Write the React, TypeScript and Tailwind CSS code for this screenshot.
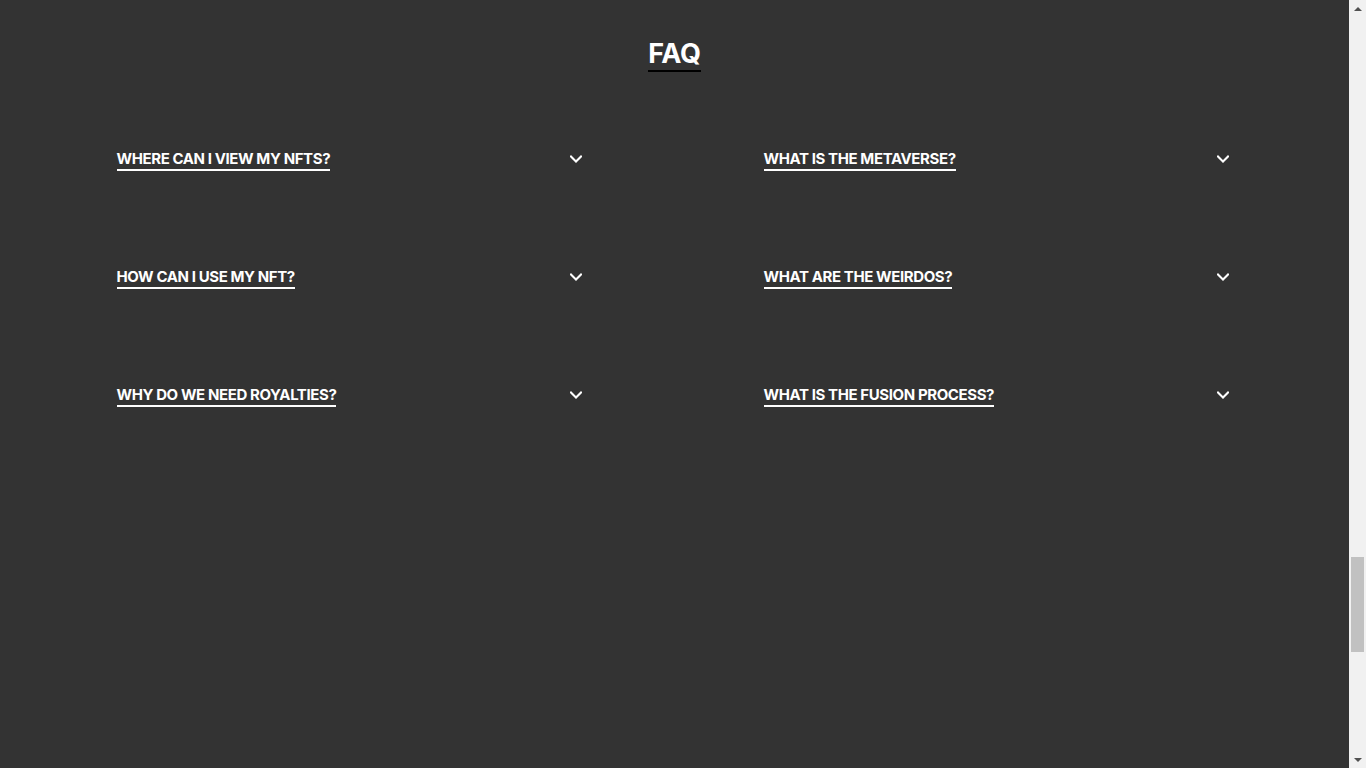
import React from "react";

const left = ["WHERE CAN I VIEW MY NFTS?", "HOW CAN I USE MY NFT?", "WHY DO WE NEED ROYALTIES?"];
const right = ["WHAT IS THE METAVERSE?", "WHAT ARE THE WEIRDOS?", "WHAT IS THE FUSION PROCESS?"];

function Chevron() {
  return (
    <svg width="12" height="8" viewBox="0 0 12 8" fill="none" className="block">
      <path d="M1 1.5 L6 6.5 L11 1.5" stroke="white" strokeWidth="2" strokeLinecap="square" />
    </svg>
  );
}

function Scrollbar() {
  return (
    <div className="w-[17px] h-full bg-[#f1f1f1] flex flex-col shrink-0">
      <div className="h-[17px] flex items-center justify-center">
        <svg width="8" height="4" viewBox="0 0 8 4"><path d="M0 4 L4 0 L8 4 Z" fill="#505050" /></svg>
      </div>
      <div className="flex-1 px-[2px]">
        <div className="mt-[540px] h-[95px] bg-[#c1c1c1]" />
      </div>
      <div className="h-[17px] flex items-center justify-center">
        <svg width="8" height="4" viewBox="0 0 8 4"><path d="M0 0 L8 0 L4 4 Z" fill="#505050" /></svg>
      </div>
    </div>
  );
}

export default function App() {
  const rows = [0, 1, 2];
  return (
    <div className="bg-[#333333] h-screen flex overflow-hidden" style={{ fontFamily: "Inter, 'Noto Sans', sans-serif" }}>
      <main className="flex-1">
        <div className="flex justify-center pt-[40px]">
          <h2 className="text-white text-[27px] font-bold leading-none border-b-2 border-black pb-[3px] tracking-[-0.3px]">
            FAQ
          </h2>
        </div>
        <div className="w-[1116px] mx-auto grid grid-cols-2 gap-x-[178px] mt-[79px]">
          {rows.map((i) => (
            <React.Fragment key={i}>
              {[left[i], right[i]].map((q) => (
                <div key={q} className="h-[118px] flex justify-between items-start">
                  <span className="text-white text-[15px] font-bold leading-none border-b-2 border-white pb-[3px] tracking-[-0.4px]">
                    {q}
                  </span>
                  <div className="mr-[4px] mt-[4px]">
                    <Chevron />
                  </div>
                </div>
              ))}
            </React.Fragment>
          ))}
        </div>
      </main>
      <Scrollbar />
    </div>
  );
}
